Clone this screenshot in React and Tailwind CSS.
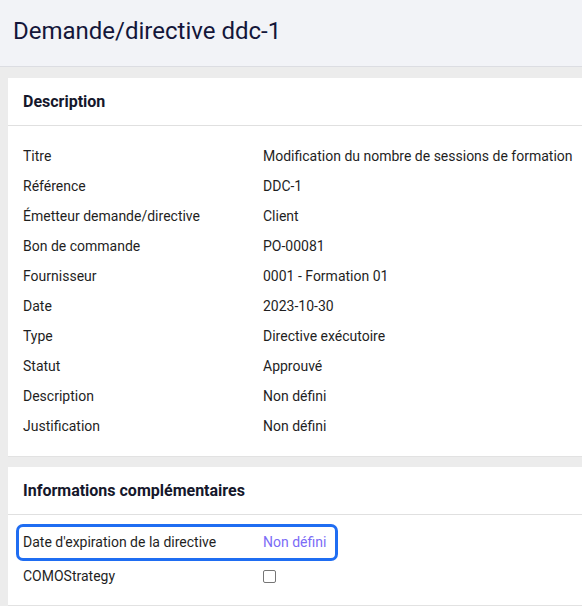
const rows = [
  ['Titre', 'Modification du nombre de sessions de formation'],
  ['Référence', 'DDC-1'],
  ['Émetteur demande/directive', 'Client'],
  ['Bon de commande', 'PO-00081'],
  ['Fournisseur', '0001 - Formation 01'],
  ['Date', '2023-10-30'],
  ['Type', 'Directive exécutoire'],
  ['Statut', 'Approuvé'],
  ['Description', 'Non défini'],
  ['Justification', 'Non défini'],
];

function Row({ label, children }) {
  return (
    <div className="flex items-center h-[30px]">
      <div className="w-[240px] shrink-0">{label}</div>
      <div className="whitespace-nowrap">{children}</div>
    </div>
  );
}

export default function App() {
  return (
    <div className="min-h-[606px] bg-[#ececec] text-[14px] text-[#1f1f1f] overflow-hidden" style={{ fontFamily: 'Roboto, "Liberation Sans", sans-serif' }}>
      <header className="h-[67px] bg-[#f2f3f7] border-b border-[#dcdde2] flex items-center px-[13px]">
        <h1 className="text-[24px] text-[#14163a] -mt-[5px]">Demande/directive ddc-1</h1>
      </header>

      <div className="pl-2 pt-[11px] flex flex-col gap-[10px]">
        <section className="bg-white border-b border-[#e2e2e2]">
          <div className="h-[48px] flex items-center px-[15px] border-b border-[#e0e0e0]">
            <h2 className="text-[16px] font-bold text-[#15172b]">Description</h2>
          </div>
          <div className="px-[15px] pt-[15px] pb-[15px]">
            {rows.map(([l, v]) => (
              <Row key={l} label={l}>{v}</Row>
            ))}
          </div>
        </section>

        <section className="bg-white border-b border-[#e2e2e2]">
          <div className="h-[48px] flex items-center px-[15px] border-b border-[#e0e0e0]">
            <h2 className="text-[16px] font-bold text-[#15172b]">Informations complémentaires</h2>
          </div>
          <div className="px-[15px] pt-[9px] pb-[14px]">
            <div className="-ml-[7px] inline-flex items-center h-[37px] border-[3px] border-[#1f6df2] rounded-[7px] pl-[4px] pr-[9px]">
              <div className="w-[240px] shrink-0">Date d'expiration de la directive</div>
              <div className="text-[#7b6cf6] whitespace-nowrap">Non défini</div>
            </div>
            <Row label="COMOStrategy">
              <span className="block w-[13px] h-[13px] border border-[#767676] rounded-[2px]" />
            </Row>
          </div>
        </section>
      </div>
    </div>
  );
}
